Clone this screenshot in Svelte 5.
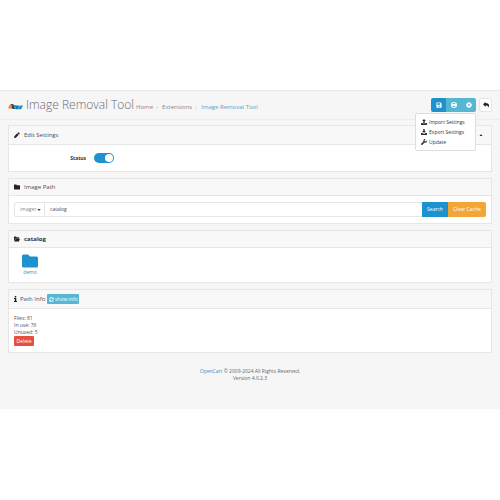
<script lang="ts">
    let enabled = $state(true)
    let menuOpen = $state(true)
    let editOpen = $state(true)
    let directory = $state("imager")
    let path = $state("catalog")

    const icons = {
        save: "M1 2.5A1.5 1.5 0 0 1 2.5 1H12l3 3v9.5a1.5 1.5 0 0 1-1.5 1.5h-11A1.5 1.5 0 0 1 1 13.5zM3 3v4h8V3zM8 9a2 2 0 1 0 0 4 2 2 0 0 0 0-4z",
        ring: "M8 0a8 8 0 1 0 0 16A8 8 0 0 0 8 0zM8 2a6 6 0 0 1 4.2 1.7L10 5.9a3 3 0 0 0-4 0L3.8 3.7A6 6 0 0 1 8 2zM8 14a6 6 0 0 1-4.2-1.7L6 10.1a3 3 0 0 0 4 0l2.2 2.2A6 6 0 0 1 8 14z",
        gear: "M9.4 0L9.8 2.1 11.2 2.7 12.9 1.5 14.5 3.1 13.3 4.8 13.9 6.2 16 6.6V9.4L13.9 9.8 13.3 11.2 14.5 12.9 12.9 14.5 11.2 13.3 9.8 13.9 9.4 16H6.6L6.2 13.9 4.8 13.3 3.1 14.5 1.5 12.9 2.7 11.2 2.1 9.8 0 9.4V6.6L2.1 6.2 2.7 4.8 1.5 3.1 3.1 1.5 4.8 2.7 6.2 2.1 6.6 0zM8 5.5a2.5 2.5 0 1 0 0 5 2.5 2.5 0 0 0 0-5z",
        reply: "M0 6l7-6v3.5c6 0 9 1.5 9 6.5 0 2-1 4-3 5 1.5-4-1-5.5-6-5.5V13z",
        pencil: "M11 1a1.5 1.5 0 0 1 2 0L15 3a1.5 1.5 0 0 1 0 2L13.5 6.5 9.5 2.5zM8.5 3.5L12.5 7.5 5 15 0 16l1-5z",
        folder: "M0 3a1.5 1.5 0 0 1 1.5-1.5H6l2 2h6.5A1.5 1.5 0 0 1 16 5v8a1.5 1.5 0 0 1-1.5 1.5h-13A1.5 1.5 0 0 1 0 13z",
        folderOpen: "M0 3a1.5 1.5 0 0 1 1.5-1.5H5l2 2h5A1.5 1.5 0 0 1 13.5 5v1.5H4L0 13zM4.5 7.5H16L13 14.5H.5z",
        info: "M5 0h4v4H5zM3 5h6v8h2v3H3v-3h2V8H3z",
        upload: "M8 0l5 5.5h-3V11H6V5.5H3zM0 10.5h4.5V12h7v-1.5H16V16H0z",
        download: "M6 0h4v5h3l-5 5.5L3 5h3zM0 10.5h4l4 2.5 4-2.5h4V16H0z",
        wrench: "M16 3.5l-3 3-3-.5-.5-3 3-3a5 5 0 0 0-6 6.5L.8 12.2a1.9 1.9 0 0 0 3 3L9.5 9.5A5 5 0 0 0 16 3.5z",
        refresh: "M1 7a7 7 0 0 1 12-4.2L15 1v6H9l2.2-2.2A4.5 4.5 0 0 0 3.5 7zM15 9a7 7 0 0 1-12 4.2L1 15V9h6l-2.2 2.2A4.5 4.5 0 0 0 12.5 9z",
        caret: "M1 4h14l-7 8z",
        caretUp: "M2 12h12L8 5z",
        chevron: "M4 1l7 7-7 7-1.5-1.5L8 8 2.5 2.5z"
    }

    const menu = [
        { icon: icons.upload, label: "Import Settings" },
        { icon: icons.download, label: "Export Settings" },
        { icon: icons.wrench, label: "Update" }
    ]
</script>

{#snippet icon(d: string, box = "0 0 16 16")}
    <svg class="icon" viewBox={box} fill="currentColor" fill-rule="evenodd" aria-hidden="true"><path {d} /></svg>
{/snippet}

<div class="page">
    <header>
        <svg class="logo" viewBox="0 0 30 14" aria-hidden="true">
            <path d="M0 11L3 4q1-2 4-2L4 11z" fill="#f08a2b" />
            <path d="M4 11l2-6 3 6z" fill="#e2542f" />
            <path d="M6 2q4-1 6 2l2 8H9z" fill="#25435f" />
            <path d="M11 4h4l5 8q-4 2-6-1z" fill="#16a3c5" />
            <path d="M15 5h6l-1 7h-3z" fill="#1d6fa6" />
            <path d="M19 5h4l3 7q-4 2-6-1z" fill="#20a9d0" />
            <path d="M22 12l3-7h5l-3 6q-1 2-5 1z" fill="#1c86c8" />
        </svg>
        <h1>Image Removal Tool</h1>
        <nav class="breadcrumb" aria-label="Breadcrumb">
            <a href="#home">Home</a>
            {@render icon(icons.chevron)}
            <a href="#extensions">Extensions</a>
            {@render icon(icons.chevron)}
            <a href="#tool" class="current">Image Removal Tool</a>
        </nav>
        <div class="actions">
            <div class="group">
                <button class="save" aria-label="Save">{@render icon(icons.save)}</button>
                <button aria-label="Help">{@render icon(icons.ring)}</button>
                <button aria-label="Settings" aria-expanded={menuOpen} onclick={() => menuOpen = !menuOpen}>{@render icon(icons.gear)}</button>
                {#if menuOpen}
                    <ul class="menu">
                        {#each menu as item}
                            <li><button>{@render icon(item.icon)}{item.label}</button></li>
                        {/each}
                    </ul>
                {/if}
            </div>
            <button class="back" aria-label="Back">{@render icon(icons.reply)}</button>
        </div>
    </header>

    <main>
        <section class="card">
            <div class="title tall">
                {@render icon(icons.pencil)}
                <h2>Edit Settings</h2>
                <button class="collapse" aria-label="Toggle settings" onclick={() => editOpen = !editOpen}>{@render icon(icons.caretUp)}</button>
            </div>
            {#if editOpen}
                <div class="status">
                    <label for="status">Status</label>
                    <input id="status" type="checkbox" role="switch" bind:checked={enabled}>
                </div>
            {/if}
        </section>

        <section class="card">
            <div class="title">
                {@render icon(icons.folder)}
                <h2>Image Path</h2>
            </div>
            <form class="path" onsubmit={(event) => event.preventDefault()}>
                <div class="directory">
                    <select aria-label="Directory" bind:value={directory}>
                        <option>imager</option>
                    </select>
                    {@render icon(icons.caret)}
                </div>
                <input type="text" aria-label="Path" bind:value={path}>
                <button class="search">Search</button>
                <button type="button" class="clear">Clear Cache</button>
            </form>
        </section>

        <section class="card">
            <div class="title">
                {@render icon(icons.folderOpen)}
                <h2 class="strong">catalog</h2>
            </div>
            <div class="files">
                <a href="#demo">
                    {@render icon(icons.folder)}
                    demo
                </a>
            </div>
        </section>

        <section class="card">
            <div class="title tall info">
                {@render icon(icons.info, "3 0 8 16")}
                <h2>Path Info</h2>
                <button class="show">{@render icon(icons.refresh)}show info</button>
            </div>
            <div class="stats">
                <div>Files: 81</div>
                <div>In use: 76</div>
                <div>Unused: 5</div>
                <button class="delete">Delete</button>
            </div>
        </section>
    </main>

    <footer>
        <a href="#opencart">OpenCart</a> © 2009-2024 All Rights Reserved.<br>
        Version 4.0.2.3
    </footer>
</div>

<style>
    :global(body) {
        background: #fff;
    }
    .page {
        margin: 90px 0;
        border-top: 1px solid #e6e6e6;
        background: #f6f6f6;
        color: #4c4d5a;
        font: 5px/7px "Open Sans", sans-serif;
    }
    .page * {
        box-sizing: border-box;
    }
    button, input, select {
        margin: 0;
        padding: 0;
        border: 0;
        background: none;
        color: inherit;
        font: inherit;
    }
    button {
        cursor: pointer;
    }
    a {
        color: #3f8bc4;
        text-decoration: none;
    }
    h1, h2 {
        margin: 0;
        font-weight: 400;
    }
    .icon {
        display: block;
        flex: none;
        width: 6px;
        height: 6px;
    }
    header {
        display: flex;
        align-items: center;
        height: 29px;
        padding: 0 8px;
        border-bottom: 1px solid #ececec;
    }
    .logo {
        width: 15px;
        height: 7px;
        margin: 2px 3px 0 0;
    }
    h1 {
        color: #6a6b75;
        font-size: 12px;
        font-weight: 300;
        line-height: 16px;
    }
    .breadcrumb {
        display: flex;
        align-items: center;
        gap: 3px;
        margin: 4px 0 0 2px;
        font-size: 6px;
    }
    .breadcrumb a {
        color: #85858c;
    }
    .breadcrumb a.current {
        color: #5f9dcc;
    }
    .breadcrumb .icon {
        width: 3px;
        height: 3px;
        color: #bbb;
    }
    .actions {
        display: flex;
        gap: 3px;
        margin-left: auto;
    }
    .group {
        position: relative;
        display: flex;
    }
    .group > button, .back {
        display: flex;
        align-items: center;
        justify-content: center;
        width: 15px;
        height: 14px;
        background: #56b7d3;
        color: #fff;
    }
    .group > .save {
        border-radius: 2px 0 0 2px;
        background: #1e91cf;
    }
    .group > button:nth-child(3) {
        border-radius: 0 2px 2px 0;
    }
    .back {
        width: 13px;
        border: 1px solid #e6e6e6;
        border-radius: 2px;
        background: #fff;
        color: #222;
    }
    .menu {
        position: absolute;
        z-index: 1;
        top: 15px;
        right: 0;
        width: 61px;
        margin: 0;
        padding: 3px 0;
        border: 1px solid #ddd;
        border-radius: 2px;
        background: #fff;
        list-style: none;
    }
    .menu button {
        display: flex;
        align-items: center;
        gap: 2px;
        width: 100%;
        height: 10px;
        padding-left: 5px;
        color: #333;
    }
    main {
        display: grid;
        gap: 6px;
        padding: 5px 8px 0;
    }
    .card {
        border: 1px solid #e6e6e6;
        background: #fff;
    }
    .title {
        display: flex;
        align-items: center;
        gap: 4px;
        height: 17px;
        padding: 0 5px;
        border-bottom: 1px solid #e6e6e6;
        background: #f8f8f8;
        color: #222;
    }
    .title.tall {
        height: 19px;
    }
    h2 {
        color: #4c4d5a;
        font-size: 6px;
    }
    h2.strong {
        color: #333;
        font-weight: 700;
    }
    .collapse {
        margin-left: auto;
        padding: 0 3px;
    }
    .collapse .icon {
        width: 4px;
        height: 4px;
    }
    .status {
        display: flex;
        align-items: center;
        height: 26px;
    }
    .status label {
        width: 16%;
        color: #333;
        font-weight: 700;
        text-align: right;
    }
    .status input {
        appearance: none;
        width: 20px;
        height: 10px;
        margin-left: 8px;
        padding: 1px;
        border-radius: 5px;
        background: #bbb;
    }
    .status input::before {
        content: "";
        display: block;
        width: 8px;
        height: 8px;
        border-radius: 50%;
        background: #fff;
    }
    .status input:checked {
        background: #1e91cf;
    }
    .status input:checked::before {
        margin-left: auto;
    }
    .path {
        display: flex;
        height: 27px;
        padding: 6px 5px;
    }
    .directory {
        display: flex;
        align-items: center;
        width: 31px;
        padding: 0 2px 0 5px;
        border: 1px solid #e6e6e6;
        border-radius: 2px 0 0 2px;
        color: #888;
    }
    .directory select {
        appearance: none;
        width: 17px;
    }
    .directory .icon {
        width: 4px;
        height: 4px;
        color: #444;
    }
    .path input {
        flex: 1;
        min-width: 0;
        padding: 0 5px;
        border: solid #e6e6e6;
        border-width: 1px 0;
    }
    .search, .clear {
        width: 26px;
        background: #1e91cf;
        color: #fff;
    }
    .clear {
        width: 38px;
        border-radius: 0 2px 2px 0;
        background: #f3a638;
    }
    .files {
        height: 34px;
        padding: 5px 13px;
    }
    .files a {
        display: inline-flex;
        flex-direction: column;
        align-items: center;
    }
    .files .icon {
        width: 16px;
        height: 16px;
        color: #1e91cf;
    }
    .title.info {
        gap: 2px;
    }
    .info > .icon {
        width: 3px;
        margin-right: 1px;
    }
    .show {
        display: flex;
        align-items: center;
        justify-content: center;
        gap: 1px;
        width: 32px;
        height: 10px;
        border-radius: 1px;
        background: #56b7d3;
        color: #fff;
    }
    .show .icon {
        width: 5px;
        height: 5px;
    }
    .stats {
        padding: 6px 5px;
    }
    .delete {
        display: block;
        width: 20px;
        height: 10px;
        border-radius: 1px;
        background: #e3503e;
        color: #fff;
    }
    footer {
        padding: 15px 0 27px;
        color: #666;
        text-align: center;
    }
</style>
